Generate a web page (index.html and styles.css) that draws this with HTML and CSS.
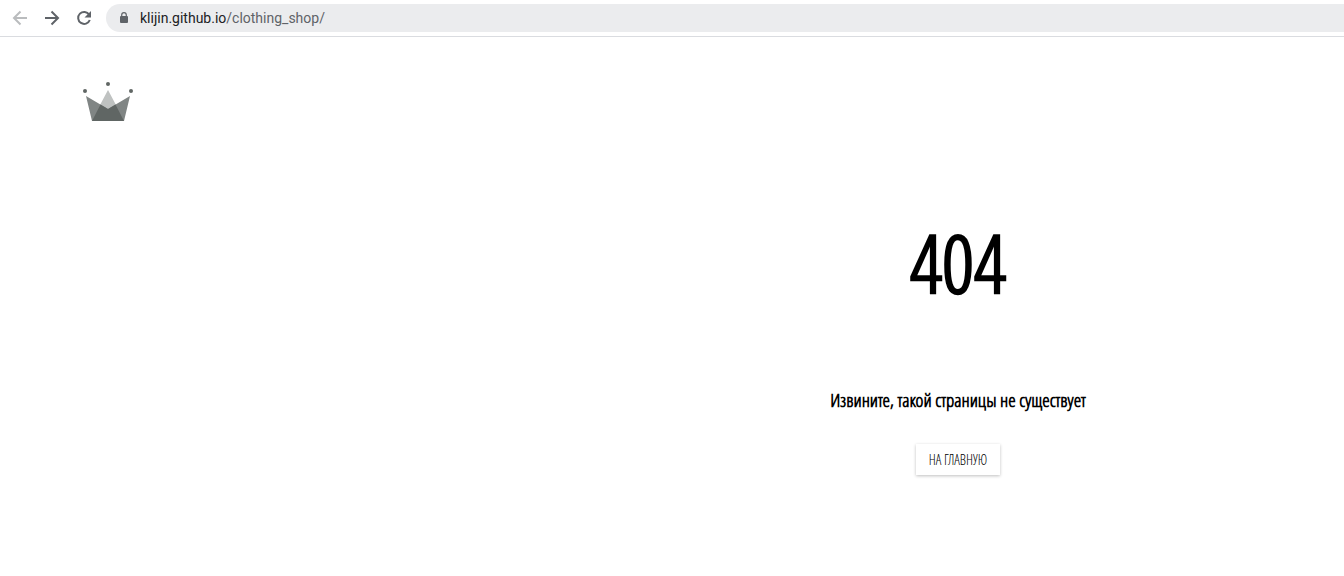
FILE: index.html
```html
<!DOCTYPE html>
<html lang="ru">
<head>
<meta charset="utf-8">
<title>404</title>
<link rel="stylesheet" href="styles.css">
</head>
<body>
<div class="toolbar">
  <button class="tool tool-disabled" type="button" aria-label="Назад">
    <svg viewBox="0 0 16 16"><path d="M15 8H2M8.500 1.500L2 8l6.500 6.500"/></svg>
  </button>
  <button class="tool" type="button" aria-label="Вперёд">
    <svg viewBox="0 0 16 16"><path d="M1 8h13M7.500 1.500L14 8l-6.500 6.500"/></svg>
  </button>
  <button class="tool" type="button" aria-label="Обновить">
    <svg viewBox="0 0 16 16"><path d="M13.200 4.600A6 6 0 1 0 13.800 10"/><path class="solid" d="M15 1v6.500H8.500z"/></svg>
  </button>
  <div class="address">
    <svg class="lock" viewBox="0 0 10 12"><path class="lock-body" d="M2 4h6a1 1 0 0 1 1 1v5a1 1 0 0 1-1 1H2a1 1 0 0 1-1-1V5a1 1 0 0 1 1-1z"/><path class="lock-bow" d="M2.700 4.500V3a2.300 2.300 0 0 1 4.600 0v1.500"/></svg>
    <a class="url" href="#"><span class="host">klijin.github.io</span>/clothing_shop/</a>
  </div>
</div>
<header class="header">
  <a class="logo" href="#" aria-label="Главная">
    <svg viewBox="0 0 50 40">
      <path class="crown-light" d="M25 8L33 23 25 28 17 23z"/>
      <path class="crown-side" d="M3 14L25 27 47 14 41 39H9z"/>
      <path class="crown-dark" d="M17.500 22.500L25 27 32.500 22.500 41 39H9z"/>
      <circle cx="2" cy="9" r="2"/><circle cx="25" cy="2" r="2"/><circle cx="48" cy="9" r="2"/>
    </svg>
  </a>
</header>
<main class="page">
  <h1 class="code">404</h1>
  <p class="message">Извините, такой страницы не существует</p>
  <a class="home" href="#">На главную</a>
</main>
</body>
</html>
```
FILE: styles.css
```css
* { box-sizing: border-box; }
body {
  margin: 0;
  background: #fff;
  color: #000;
  font-family: "Open Sans Condensed Light", "Open Sans Condensed", "Liberation Sans Narrow", sans-serif;
  font-weight: 300;
}
.toolbar {
  display: flex;
  align-items: center;
  height: 37px;
  padding-left: 4px;
  border-bottom: 1px solid #dadce0;
}
.tool {
  display: flex;
  width: 32px;
  height: 32px;
  padding: 8px;
  border: 0;
  background: none;
}
.tool svg { width: 16px; height: 16px; fill: none; stroke: #5f6368; stroke-width: 2; }
.tool-disabled svg { stroke: #babcbe; }
.tool .solid { fill: #5f6368; stroke: none; }
.address {
  flex: 1;
  display: flex;
  align-items: center;
  gap: 11px;
  height: 28px;
  margin-left: 6px;
  padding-left: 13px;
  border-radius: 14px 0 0 14px;
  background: #ebecee;
}
.lock { width: 10px; height: 12px; }
.lock-body { fill: #5f6368; }
.lock-bow { fill: none; stroke: #5f6368; stroke-width: 1.200; }
.url { color: #5f6368; font: 14px/20px Roboto, sans-serif; text-decoration: none; }
.host { color: #202124; }
.header { padding: 45px 83px 0; }
.logo { display: inline-flex; }
.logo svg { width: 50px; height: 40px; fill: #606664; }
.logo .crown-light { fill: #bfc2c1; }
.logo .crown-side { fill: #808584; }
.logo .crown-dark { fill: #606664; }
.page {
  display: flex;
  flex-direction: column;
  align-items: center;
  padding: 79px 0 80px 572px;
}
.code { margin: 0; font-size: 80px; line-height: 112px; font-weight: 700; }
.message { margin: 70px 0 0; font-size: 19px; line-height: 24px; font-weight: 700; }
.home {
  margin-top: 32px;
  padding: 6px 13px;
  font-size: 14px;
  line-height: 19px;
  color: #000;
  text-decoration: none;
  text-transform: uppercase;
  box-shadow: 0 1px 3px rgba(0, 0, 0, 0.25);
}
```
